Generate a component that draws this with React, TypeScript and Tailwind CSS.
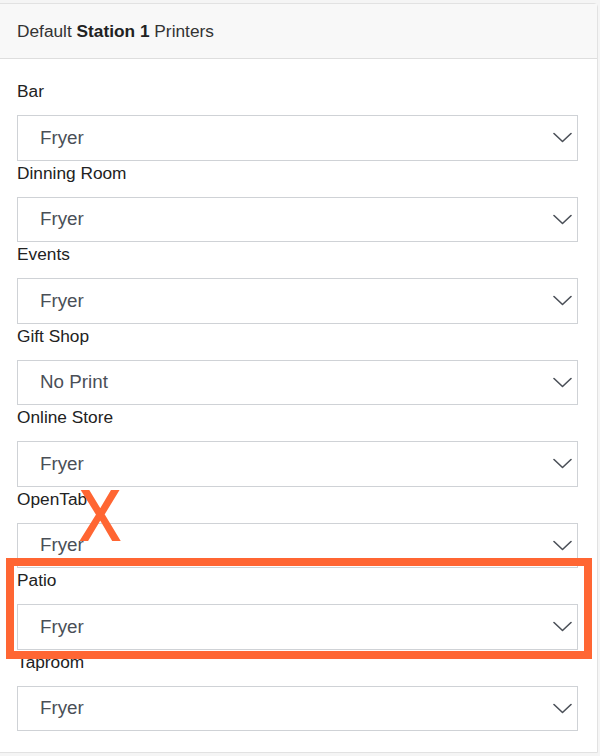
const ROOMS = [
  { name: 'Bar', value: 'Fryer' },
  { name: 'Dinning Room', value: 'Fryer' },
  { name: 'Events', value: 'Fryer' },
  { name: 'Gift Shop', value: 'No Print' },
  { name: 'Online Store', value: 'Fryer' },
  { name: 'OpenTab', value: 'Fryer' },
  { name: 'Patio', value: 'Fryer' },
  { name: 'Taproom', value: 'Fryer' },
]

function Chevron() {
  return (
    <svg width="19" height="11" viewBox="0 0 19 11" fill="none">
      <path d="M1 1.5 L9.5 9.5 L18 1.5" stroke="#4b5058" strokeWidth="1.6" strokeLinecap="round" strokeLinejoin="round" />
    </svg>
  )
}

function PrinterSelect({ value }: { value: string }) {
  return (
    <div className="flex h-[45.5px] items-center justify-between border border-[#cfd2d6] bg-white pl-[22px] pr-[5px]">
      <span className="text-[18.8px] text-[#4a4f57]">{value}</span>
      <Chevron />
    </div>
  )
}

export default function App() {
  return (
    <div className="relative min-h-[756px] w-[600px] overflow-hidden bg-[#f5f5f5] font-['Liberation_Sans',Arial,sans-serif]">
      <div className="ml-[-3px] mt-[3px] w-[601px] rounded-tr-[4px] border border-[#e2e2e2] bg-white">
        {/* Header */}
        <div className="flex h-[55px] items-center border-b border-[#dedede] bg-[#f8f8f8] pl-[19px] pt-[1px] text-[17.3px] text-[#333]">
          <span>
            Default <b className="font-bold text-[#222]">Station 1</b> Printers
          </span>
        </div>

        {/* Rooms */}
        <div className="flex flex-col px-[19px] pb-[21px] pt-[20px]">
          {ROOMS.map((room) => (
            <div key={room.name} className="flex flex-col">
              <label className="mb-[12px] pt-[1px] text-[17.3px] leading-[23px] text-[#222]">{room.name}</label>
              <PrinterSelect value={room.value} />
            </div>
          ))}
        </div>
      </div>

      {/* Annotation overlays */}
      <span className="absolute left-[80px] top-[481px] origin-left scale-x-[0.86] text-[70px] leading-[70px] text-[#ff6633] [-webkit-text-stroke:2.2px_#ff6633]">X</span>
      <div className="absolute left-[6px] top-[558px] h-[101px] w-[586px] border-[8px] border-[#ff6633]" />
    </div>
  )
}
